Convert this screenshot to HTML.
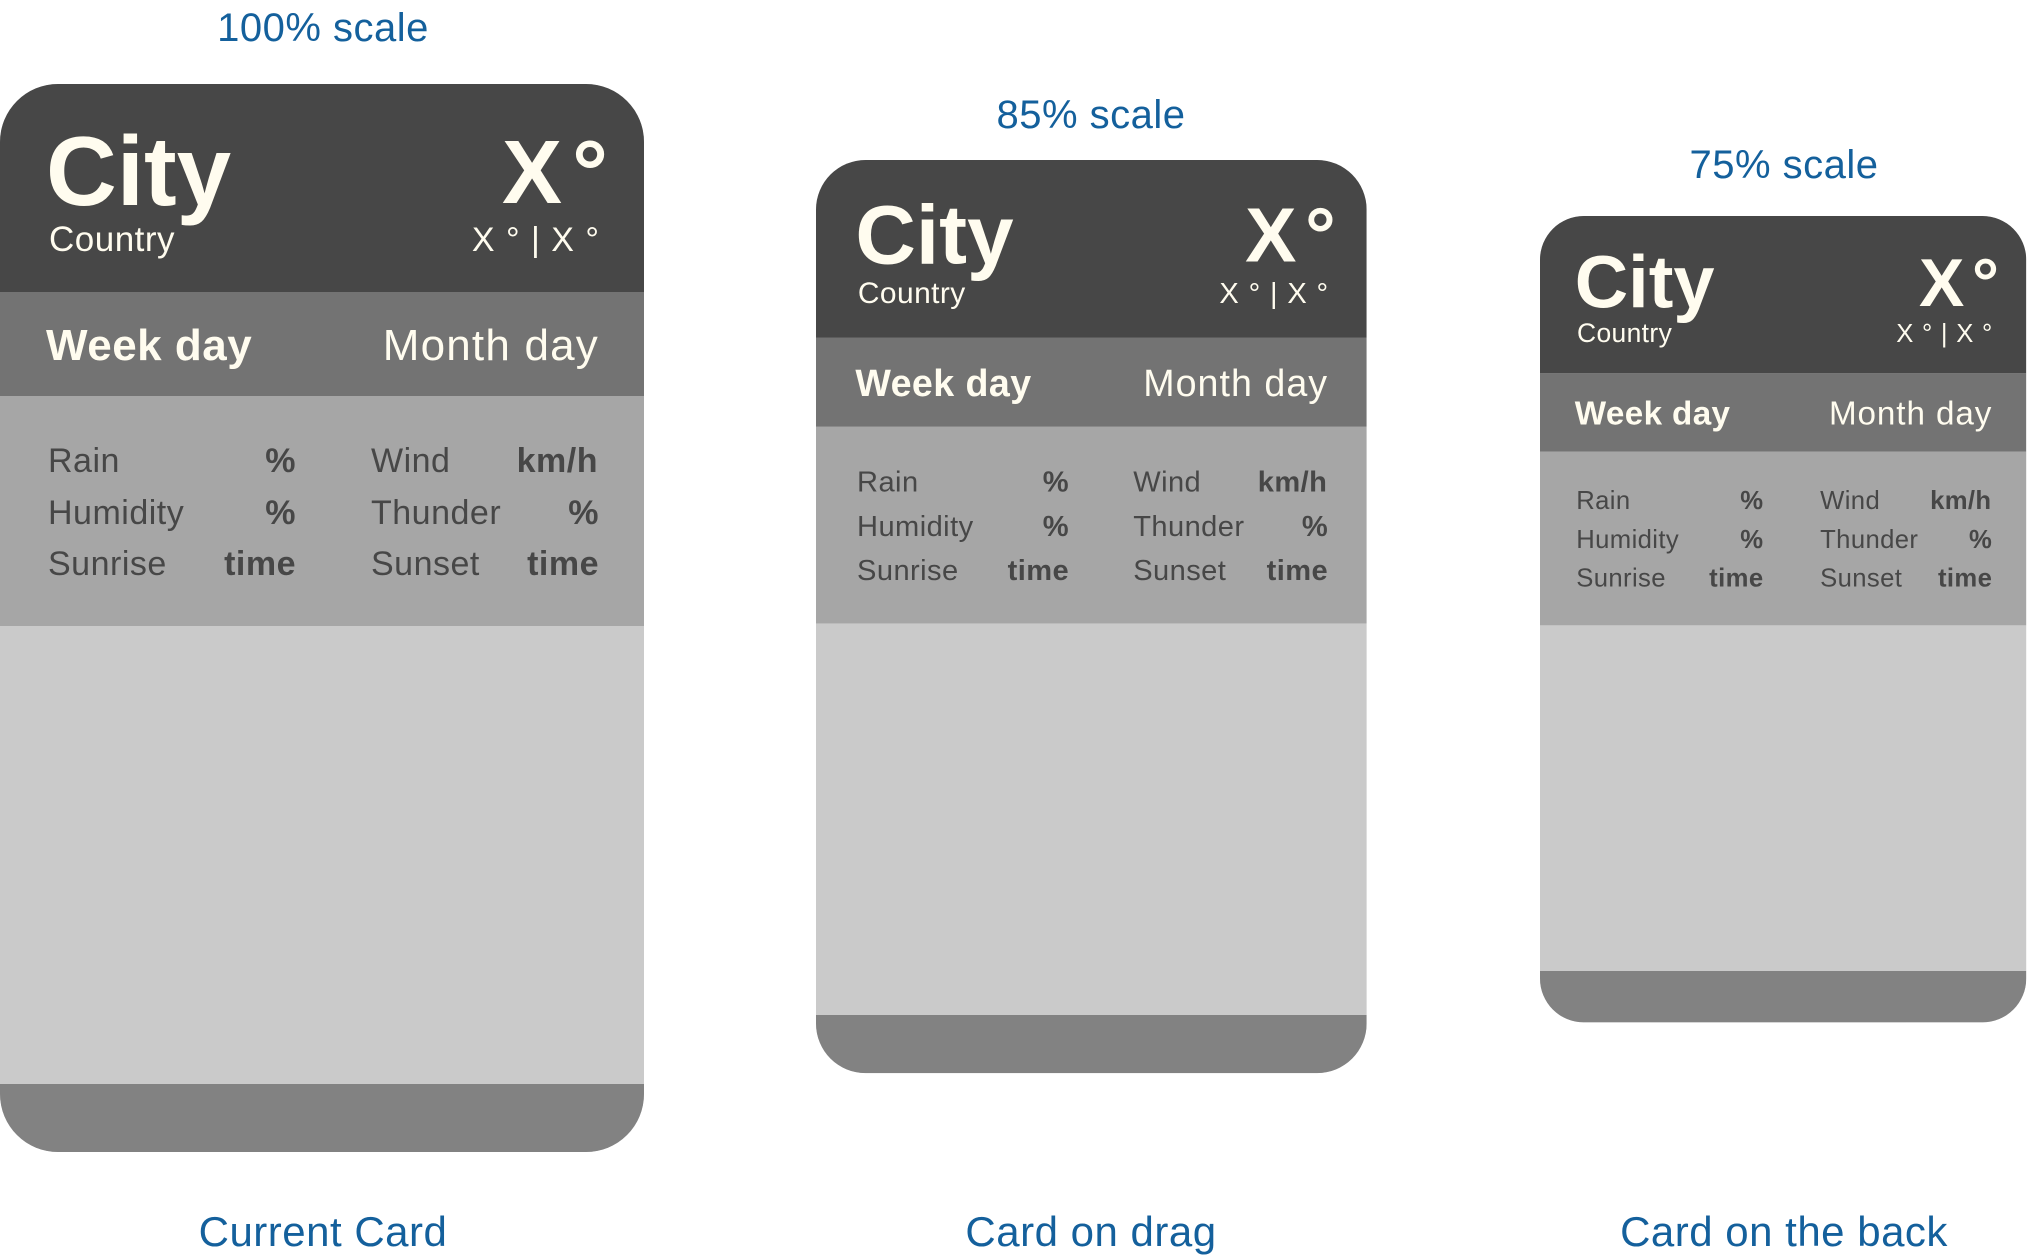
<!DOCTYPE html>
<html><head><meta charset="utf-8"><style>
*{margin:0;padding:0;box-sizing:border-box}
body{width:2028px;height:1256px;background:#fff;position:relative;overflow:hidden;font-family:"Liberation Sans","DejaVu Sans",sans-serif}
.lbl{position:absolute;color:#14609c;font-size:40px;transform:translateX(-50%);white-space:nowrap;line-height:1;letter-spacing:0.5px}
.card{position:absolute;width:644px;height:1068px;border-radius:58px;overflow:hidden;background:#cacaca;transform-origin:0 0}
.card div{position:absolute;white-space:nowrap;line-height:1}
.hd{left:0;top:0;width:644px;height:208px;background:#474747}
.wk{left:0;top:208px;width:644px;height:104px;background:#737373}
.st{left:0;top:312px;width:644px;height:230px;background:#a6a6a6}
.bt{left:0;top:1000px;width:644px;height:68px;background:#828282}
.c{color:#fffcef}
.city{left:46px;top:38px;font-size:98px;font-weight:bold;letter-spacing:0px}
.country{left:49px;top:138px;font-size:35px;letter-spacing:0.5px}
.temp{right:36px;top:44px;font-size:90px;font-weight:bold}
.temp span{margin-left:10px}
.range{right:44px;top:139px;font-size:34px;letter-spacing:1px}
.wd{left:46px;top:240px;font-size:44px;font-weight:bold;letter-spacing:0.5px}
.md{right:45px;top:240px;font-size:44px;letter-spacing:1.2px}
.s{color:#474747;font-size:34px;letter-spacing:0.5px}
.b{font-weight:bold}
</style></head><body>
<div class="lbl" style="left:323px;top:8px">100% scale</div>
<div class="lbl" style="left:1091px;top:95px">85% scale</div>
<div class="lbl" style="left:1784px;top:145px">75% scale</div>
<div class="lbl" style="left:323px;top:1211px;font-size:42px">Current Card</div>
<div class="lbl" style="left:1091px;top:1211px;font-size:42px">Card on drag</div>
<div class="lbl" style="left:1784px;top:1211px;font-size:42px">Card on the back</div>

<div class="card" style="left:0;top:84px">
<div class="hd"></div><div class="wk"></div><div class="st"></div><div class="bt"></div>
<div class="c city">City</div><div class="c country">Country</div>
<div class="c temp">X<span>°</span></div><div class="c range">X ° | X °</div>
<div class="c wd">Week day</div><div class="c md">Month day</div>
<div class="s" style="left:48px;top:360px">Rain</div><div class="s b" style="right:348px;top:360px">%</div>
<div class="s" style="left:48px;top:412px">Humidity</div><div class="s b" style="right:348px;top:412px">%</div>
<div class="s" style="left:48px;top:463px">Sunrise</div><div class="s b" style="right:348px;top:463px">time</div>
<div class="s" style="left:371px;top:360px">Wind</div><div class="s b" style="right:46px;top:360px">km/h</div>
<div class="s" style="left:371px;top:412px">Thunder</div><div class="s b" style="right:45px;top:412px">%</div>
<div class="s" style="left:371px;top:463px">Sunset</div><div class="s b" style="right:45px;top:463px">time</div>
</div>

<div class="card" style="left:816px;top:160px;transform:scale(0.855)">
<div class="hd"></div><div class="wk"></div><div class="st"></div><div class="bt"></div>
<div class="c city">City</div><div class="c country">Country</div>
<div class="c temp">X<span>°</span></div><div class="c range">X ° | X °</div>
<div class="c wd">Week day</div><div class="c md">Month day</div>
<div class="s" style="left:48px;top:360px">Rain</div><div class="s b" style="right:348px;top:360px">%</div>
<div class="s" style="left:48px;top:412px">Humidity</div><div class="s b" style="right:348px;top:412px">%</div>
<div class="s" style="left:48px;top:463px">Sunrise</div><div class="s b" style="right:348px;top:463px">time</div>
<div class="s" style="left:371px;top:360px">Wind</div><div class="s b" style="right:46px;top:360px">km/h</div>
<div class="s" style="left:371px;top:412px">Thunder</div><div class="s b" style="right:45px;top:412px">%</div>
<div class="s" style="left:371px;top:463px">Sunset</div><div class="s b" style="right:45px;top:463px">time</div>
</div>

<div class="card" style="left:1540px;top:216px;transform:scale(0.755)">
<div class="hd"></div><div class="wk"></div><div class="st"></div><div class="bt"></div>
<div class="c city">City</div><div class="c country">Country</div>
<div class="c temp">X<span>°</span></div><div class="c range">X ° | X °</div>
<div class="c wd">Week day</div><div class="c md">Month day</div>
<div class="s" style="left:48px;top:360px">Rain</div><div class="s b" style="right:348px;top:360px">%</div>
<div class="s" style="left:48px;top:412px">Humidity</div><div class="s b" style="right:348px;top:412px">%</div>
<div class="s" style="left:48px;top:463px">Sunrise</div><div class="s b" style="right:348px;top:463px">time</div>
<div class="s" style="left:371px;top:360px">Wind</div><div class="s b" style="right:46px;top:360px">km/h</div>
<div class="s" style="left:371px;top:412px">Thunder</div><div class="s b" style="right:45px;top:412px">%</div>
<div class="s" style="left:371px;top:463px">Sunset</div><div class="s b" style="right:45px;top:463px">time</div>
</div>
</body></html>
